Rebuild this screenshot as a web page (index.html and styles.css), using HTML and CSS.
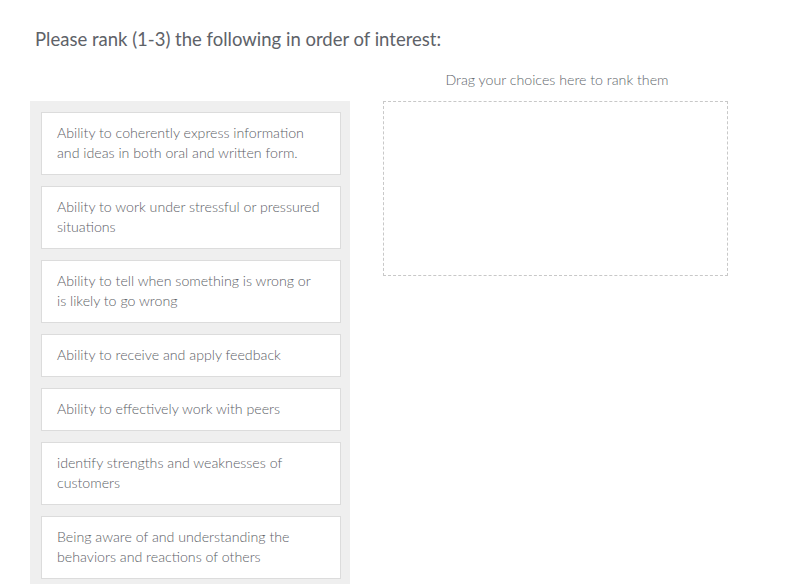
FILE: index.html
```html
<!DOCTYPE html>
<html>
<head>
<meta charset="utf-8">
<link rel="stylesheet" href="styles.css">
</head>
<body>
<div class="page">
  <h1 class="question">Please rank (1-3) the following in order of interest:</h1>
  <div class="rank-area">
    <div class="choices">
      <div class="choice">Ability to coherently express information and ideas in both oral and written form.</div>
      <div class="choice">Ability to work under stressful or pressured situations</div>
      <div class="choice">Ability to tell when something is wrong or is likely to go wrong</div>
      <div class="choice">Ability to receive and apply feedback</div>
      <div class="choice">Ability to effectively work with peers</div>
      <div class="choice">identify strengths and weaknesses of customers</div>
      <div class="choice">Being aware of and understanding the behaviors and reactions of others</div>
    </div>
    <div class="target">
      <div class="target-label">Drag your choices here to rank them</div>
      <div class="dropzone"></div>
    </div>
  </div>
</div>
</body>
</html>
```

FILE: styles.css
```css
html, body {
  margin: 0;
  padding: 0;
  background: #fff;
}
body {
  font-family: "Lato", "Liberation Sans", sans-serif;
  overflow: hidden;
  height: 584px;
}
.page {
  padding: 27px 0 0 30px;
}
.question {
  margin: 0 0 0 5px;
  font-size: 18.5px;
  font-weight: 400;
  line-height: 24px;
  color: #5e6268;
}
.rank-area {
  display: flex;
  gap: 33px;
  margin-top: 9px;
}
.choices {
  width: 320px;
  box-sizing: border-box;
  background: #efefef;
  padding: 11px 9px 11px 11px;
  margin-top: 41px;
  display: flex;
  flex-direction: column;
  gap: 11px;
}
.choice {
  background: #fff;
  border: 1px solid #dcdcdc;
  padding: 10px 20px 11px 15px;
  font-size: 14.2px;
  font-weight: 300;
  line-height: 20px;
  color: #5c6066;
}
.target {
  width: 345px;
  display: flex;
  flex-direction: column;
  margin-top: 10px;
}
.target-label {
  text-align: center;
  font-size: 14.2px;
  font-weight: 300;
  line-height: 20px;
  color: #62666b;
  padding-left: 3px;
  margin-bottom: 11px;
}
.dropzone {
  height: 175px;
  box-sizing: border-box;
  border: 1px dashed #c8c8c8;
}
```
